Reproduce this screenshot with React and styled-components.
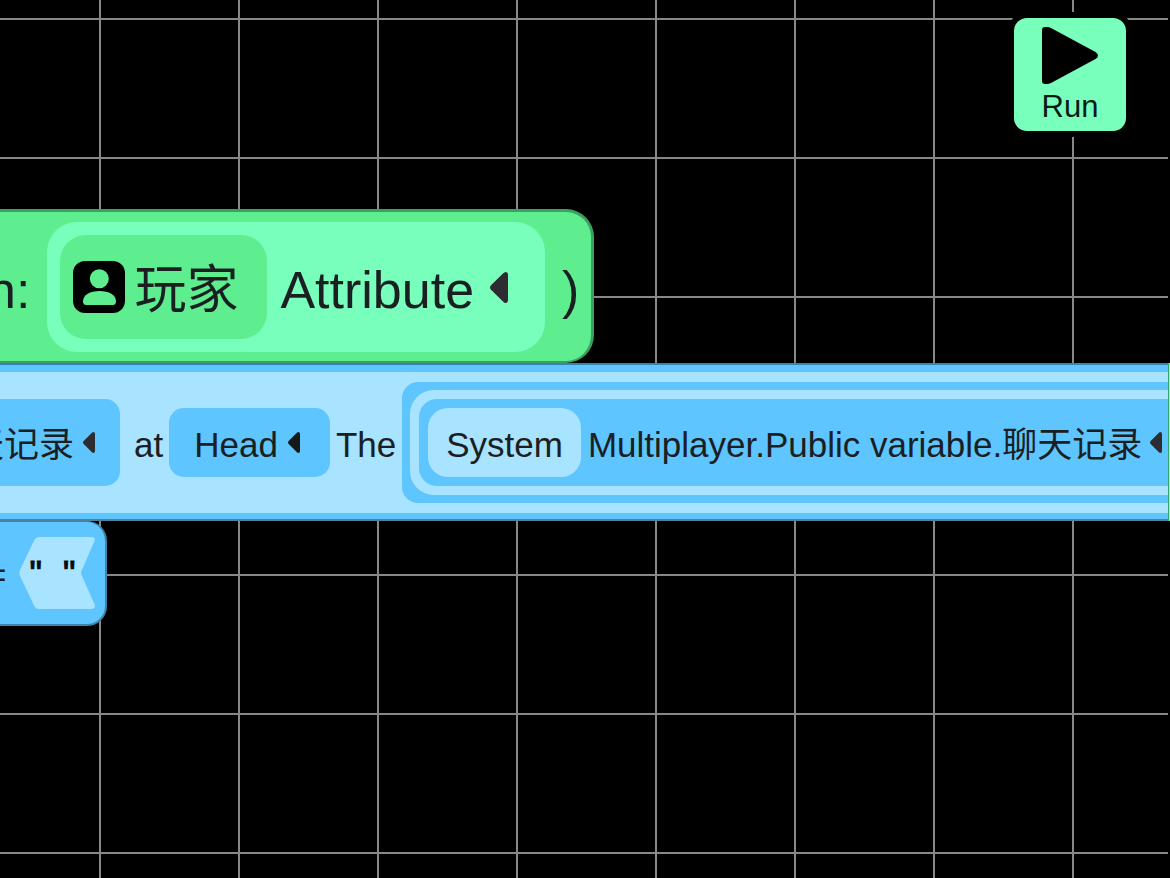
import React from "react";
import styled, { createGlobalStyle } from "styled-components";

const color = {
  green: "#5eee8f",
  mint: "#78ffbc",
  blue: "#5ec5ff",
  sky: "#a8e3ff",
  ink: "#1a2022",
};

const GlobalStyle = createGlobalStyle`
  * { box-sizing: border-box; }
  html, body { margin: 0; background: #000; overflow: hidden; }
  body {
    color: ${color.ink};
    font-family: "Liberation Sans", Arial, "Noto Sans CJK SC", sans-serif;
  }
`;

const Canvas = styled.main`
  position: relative;
  min-height: 100vh;
  padding-top: 209px;
  border-right: 2px solid #000;
  background-color: #000;
  background-image:
    linear-gradient(to right, #888 2px, transparent 2px),
    linear-gradient(to bottom, #888 2px, transparent 2px);
  background-size: 139px 139px;
  background-position: 99px 18px;
  background-clip: padding-box;
`;

const Stack = styled.div`
  display: flex;
  flex-direction: column;
  align-items: flex-start;
`;

const Block = styled.section`
  display: flex;
  align-items: center;
  white-space: nowrap;
`;

const PrintBlock = styled(Block)`
  padding: 10px 12px 9px 0;
  gap: 17px;
  background: ${color.green};
  border: solid #3ba15f;
  border-width: 3px 3px 2px 0;
  border-radius: 0 28px 28px 0;
  font-size: 52px;
  line-height: 60px;
`;

const ListRow = styled.div`
  display: flex;
  align-self: stretch;
  margin-right: -2px;
`;

const ListBlock = styled(Block)`
  flex: 1;
  min-width: 0;
  overflow: hidden;
  padding: 7px 0 6px;
  background: ${color.blue};
  border: solid;
  border-color: #3685b4 transparent #527f9a;
  border-width: 2px 0;
  font-size: 35px;
  line-height: 40px;
`;

const ListBody = styled.div`
  flex: none;
  display: flex;
  align-items: center;
  gap: 6px;
  min-width: 100%;
  padding: 10px 0;
  background: ${color.sky};
`;

const NextBlock = styled.div`
  flex: none;
  width: 2px;
  background: ${color.mint};
  border-left: 1px solid #3ba17a;
`;

const CompareBlock = styled(Block)`
  height: 105px;
  padding-right: 10px;
  gap: 13px;
  background: ${color.blue};
  border: solid #3f84ad;
  border-width: 1px 2px 2px 0;
  border-radius: 0 20px 20px 0;
  font-size: 35px;
  line-height: 40px;
`;

const Label = styled.span`
  flex: none;
  padding-top: ${(p) => (p.$large ? 6 : 4)}px;
  margin-left: ${(p) => -(p.$cut || 0)}px;
`;

const Slot = styled.div`
  flex: none;
  display: flex;
  align-items: center;
  background: ${(p) => color[p.$tone]};
  border-radius: ${(p) => p.$radius}px;
  padding: ${(p) => p.$pad};
  gap: ${(p) => p.$gap || 0}px;
`;

const Menu = styled.button`
  flex: none;
  display: flex;
  align-items: center;
  gap: ${(p) => p.$gap}px;
  height: ${(p) => p.$height}px;
  padding: ${(p) => p.$pad || 0};
  margin: ${(p) => p.$margin || 0};
  border: 0;
  border-radius: ${(p) => p.$radius || 0};
  background: ${(p) => (p.$tone ? color[p.$tone] : "transparent")};
  color: inherit;
  font: inherit;
  white-space: nowrap;
`;

const Caret = styled.svg`
  flex: none;
  display: block;
  width: ${(p) => (p.$large ? 18 : 12)}px;
  height: ${(p) => (p.$large ? 31 : 21)}px;
  fill: ${(p) => (p.$dark ? "#161819" : "#2d2c30")};
`;

const Avatar = styled.svg`
  flex: none;
  display: block;
  width: 52px;
  height: 52px;
`;

const TextValue = styled.label`
  position: relative;
  flex: none;
  display: flex;
  width: 76px;
  height: 72px;
  padding: 16px 0 0 10px;
`;

const TextShape = styled.svg`
  position: absolute;
  inset: 0;
  width: 76px;
  height: 72px;
  fill: ${color.sky};
`;

const Quote = styled.span`
  position: relative;
  color: #080c0e;
  -webkit-text-stroke: 1px #080c0e;
`;

const TextField = styled.input`
  position: relative;
  width: 21px;
  height: 40px;
  padding: 0;
  border: 0;
  outline: 0;
  background: transparent;
  color: inherit;
  font: inherit;
`;

const RunButton = styled.button`
  position: absolute;
  top: 18px;
  right: 42px;
  display: flex;
  flex-direction: column;
  align-items: center;
  gap: 5px;
  width: 112px;
  height: 113px;
  padding: 9px 0 0;
  border: 0;
  border-radius: 13px;
  background: ${color.mint};
  box-shadow: 0 0 0 6px #000;
  color: #0c1a14;
  font: inherit;
  font-size: 31px;
  line-height: 36px;
`;

const PlayIcon = styled.svg`
  flex: none;
  display: block;
  width: 56px;
  height: 57px;
`;

function Arrow({ large, dark }) {
  return (
    <Caret $large={large} $dark={dark} viewBox="0 0 18 31" preserveAspectRatio="none" aria-hidden="true">
      <path d="M18 3V28Q18 31 15.5 31Q14.5 31 13 29.500L1 17.800Q-1 15.5 1 13.200L13 1.500Q14.5 0 15.5 0Q18 0 18 3Z" />
    </Caret>
  );
}

export default function App() {
  return (
    <Canvas>
      <GlobalStyle />
      <Stack>
        <PrintBlock>
          <Label $large $cut={13}>n:</Label>
          <Slot $tone="mint" $radius={30} $pad="13px 37px 13px 13px" $gap={13}>
            <Menu type="button" $tone="green" $height={104} $radius="26px" $gap={9} $pad="0 29px 0 13px">
              <Avatar viewBox="0 0 52 52" aria-hidden="true">
                <rect width="52" height="52" rx="12" fill="#000" />
                <circle cx="26.3" cy="17.8" r="9.5" fill={color.green} />
                <path d="M13.5 44Q10 44 10 40.5C10 34 17 30 26.5 30S43 34 43 40.5Q43 44 39.5 44Z" fill={color.green} />
              </Avatar>
              <Label $large>玩家</Label>
            </Menu>
            <Menu type="button" $height={60} $gap={16}>
              <Label $large>Attribute</Label>
              <Arrow large />
            </Menu>
          </Slot>
          <Label $large>)</Label>
        </PrintBlock>

        <ListRow>
          <ListBlock>
            <ListBody>
              <Menu type="button" $tone="blue" $height={87} $radius="0 15px 15px 0" $gap={9} $pad="0 25px 0 0" $margin="0 8px 0 0">
                <Label $cut={31}>天记录</Label>
                <Arrow />
              </Menu>
              <Label>at</Label>
              <Menu type="button" $tone="blue" $height={69} $radius="15px" $gap={10} $pad="0 30px 0 25px">
                <Label>Head</Label>
                <Arrow dark />
              </Menu>
              <Label>The</Label>
              <Slot $tone="blue" $radius={16} $pad="8px">
                <Slot $tone="sky" $radius={24} $pad="9px">
                  <Slot $tone="blue" $radius={18} $pad="9px 80px 9px 9px" $gap={7}>
                    <Menu type="button" $tone="sky" $height={69} $radius="20px" $pad="0 18px">
                      <Label>System</Label>
                    </Menu>
                    <Menu type="button" $height={69} $gap={8}>
                      <Label>Multiplayer.Public variable.聊天记录</Label>
                      <Arrow />
                    </Menu>
                  </Slot>
                </Slot>
              </Slot>
            </ListBody>
          </ListBlock>
          <NextBlock />
        </ListRow>

        <CompareBlock>
          <Label $cut={14}>=</Label>
          <TextValue>
            <TextShape viewBox="0 0 76 72" aria-hidden="true">
              <path d="M20 0H72Q77 0 75.5 4L62.5 34Q61.500 36 62.500 38L75.500 67Q77 72 72 72H20Q17 72 15.500 69.500L1 39Q-.5 36 1 33L15.500 2.500Q17 0 20 0Z" />
            </TextShape>
            <Quote>"</Quote>
            <TextField type="text" aria-label="Text value" defaultValue="" />
            <Quote>"</Quote>
          </TextValue>
        </CompareBlock>
      </Stack>

      <RunButton type="button">
        <PlayIcon viewBox="0 0 56 57" aria-hidden="true">
          <path d="M0 3Q0 0 3 0H5Q7 0 9 1L53.500 25Q56 26.500 56 28.500T53.500 32L9 56Q7 57 5 57H3Q0 57 0 54Z" />
        </PlayIcon>
        Run
      </RunButton>
    </Canvas>
  );
}
